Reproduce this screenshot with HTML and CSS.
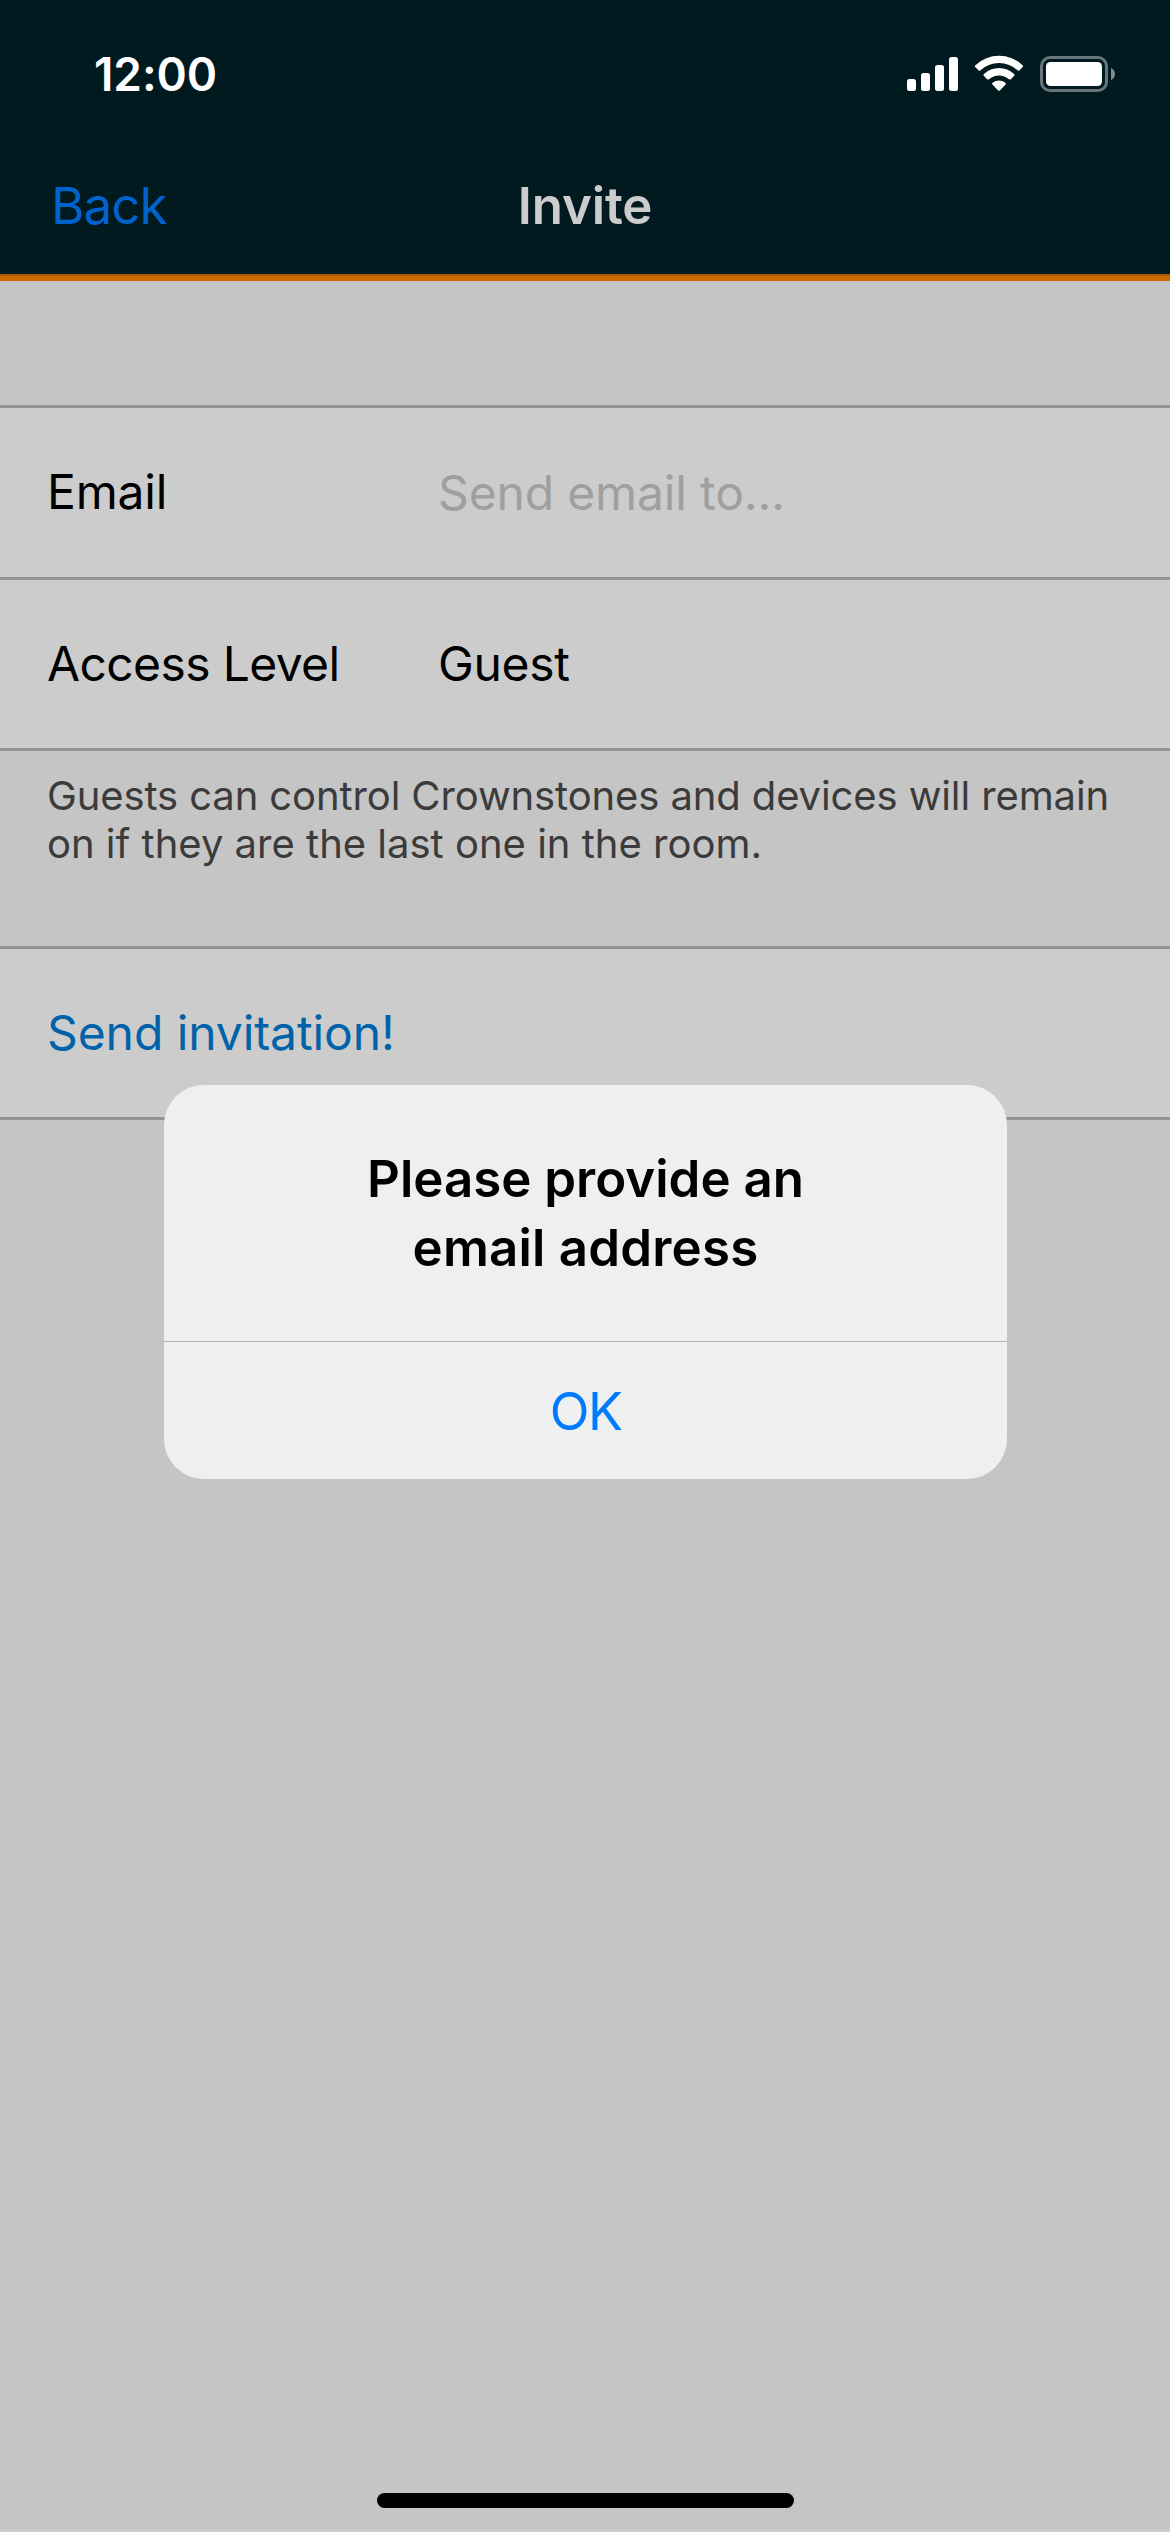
FILE: index.html
```html
<!DOCTYPE html>
<html lang="en">
<head>
<meta charset="utf-8">
<title>Invite</title>
<link rel="stylesheet" href="styles.css">
</head>
<body>
<div class="screen">
  <header class="header">
    <div class="status-bar">
      <span class="time">12:00</span>
      <svg class="status-icons" width="208" height="38" viewBox="907 55 208 38" aria-hidden="true">
        <g fill="#fff">
          <rect x="907" y="79" width="9" height="12" rx="2.5"/>
          <rect x="921" y="73" width="9" height="18" rx="2.5"/>
          <rect x="935" y="65" width="9" height="26" rx="2.5"/>
          <rect x="949" y="57" width="9" height="34" rx="2.5"/>
          <path d="M975.4 65.2A34.5 34.5 0 0 1 1022.6 65.2Q1023.6 66.2 1022.7 67.1L1019.3 70.6Q1018.6 71.3 1017.9 70.6A27.5 27.5 0 0 0 980.1 70.6Q979.4 71.3 978.7 70.6L975.3 67.1Q974.4 66.2 975.4 65.2Z"/>
          <path d="M983.9 73.9A22 22 0 0 1 1014.1 73.9Q1015.2 74.9 1014.2 75.8L1010.9 79.2Q1010 80 1009 79.2A15 15 0 0 0 989 79.2Q988 80 987.1 79.2L983.8 75.8Q982.8 74.9 983.9 73.9Z"/>
          <path d="M992.6 82.7A10.3 10.3 0 0 1 1005.4 82.7Q1006.5 83.6 1005.6 84.5L999.8 90.4Q999 91.2 998.2 90.4L992.4 84.5Q991.5 83.6 992.6 82.7Z"/>
          <rect x="1046" y="62" width="56" height="24" rx="4.5"/>
        </g>
        <rect x="1041.5" y="57.5" width="65" height="33" rx="8.5" fill="none" stroke="#66767a" stroke-width="3"/>
        <path d="M1111 68Q1115 70 1115 74T1111 80Z" fill="#7f8d90"/>
      </svg>
    </div>
    <nav class="nav-bar">
      <a class="back">Back</a>
      <h1 class="title">Invite</h1>
      <span></span>
    </nav>
    <div class="accent"></div>
  </header>

  <main class="content">
    <section class="group">
      <div class="row">
        <label class="label email">Email</label>
        <span class="placeholder">Send email to...</span>
      </div>
      <div class="row">
        <span class="label">Access Level</span>
        <span class="value">Guest</span>
      </div>
    </section>
    <p class="note"><span class="note-first">Guests can control Crownstones and devices will remain</span><br>on if they are the last one in the room.</p>
    <section class="group">
      <div class="row"><a class="send">Send invitation!</a></div>
    </section>
  </main>
  <div class="bottom-edge"></div>

  <div class="alert" role="alertdialog">
    <h2 class="alert-title">Please provide an<br><span class="alert-second">email address</span></h2>
    <div class="alert-action">OK</div>
  </div>
  <div class="home-indicator"></div>
</div>
</body>
</html>
```
FILE: styles.css
```css
* { box-sizing: border-box; }

body { margin: 0; }

.screen {
  position: relative;
  display: flex;
  flex-direction: column;
  width: 1170px;
  height: 2532px;
  overflow: hidden;
  background: #c5c5c5;
  color: #000;
  font-family: "Inter", sans-serif;
  font-size: 48px;
}

.header {
  display: flex;
  flex-direction: column;
  height: 281px;
  background: #001a20;
}

.status-bar {
  display: flex;
  justify-content: space-between;
  align-items: center;
  height: 148px;
  padding: 0 55px 0 94px;
}

.time {
  color: #fff;
  font-size: 46px;
  font-weight: 600;
  letter-spacing: -0.1px;
}

.nav-bar {
  display: grid;
  grid-template-columns: 1fr auto 1fr;
  align-items: center;
  height: 114px;
  padding: 0 51px;
}

.back {
  color: #0062cc;
  font-size: 51px;
  letter-spacing: -0.9px;
}

.title {
  margin: 0;
  color: #ccc;
  font-size: 51px;
  font-weight: 600;
  letter-spacing: -0.15px;
}

.accent {
  height: 7px;
  margin-top: auto;
  background: #cc6a00;
  border-top: 2px solid #a95800;
}

.content {
  flex: 1;
  padding-top: 124px;
}

.group { border-top: 3px solid #949494; }

.row {
  display: flex;
  align-items: center;
  height: 171px;
  padding: 0 47px;
  background: #ccc;
  border-bottom: 3px solid #949494;
}

.row:first-child:not(:last-child) { height: 172px; }

.label {
  width: 391px;
  padding-bottom: 2px;
  letter-spacing: -0.63px;
}

.email { letter-spacing: -0.2px; }

.placeholder {
  color: #9f9fa0;
  letter-spacing: -0.15px;
}

.value {
  padding-bottom: 2px;
  letter-spacing: -0.3px;
}

.note {
  height: 195px;
  margin: 0;
  padding: 21px 47px 0;
  color: #3b3b3b;
  font-size: 40px;
  line-height: 48px;
  white-space: nowrap;
}

.note-first { letter-spacing: -0.11px; }

.send {
  padding-bottom: 2px;
  color: #0062a8;
  letter-spacing: -0.08px;
}

.alert {
  position: absolute;
  top: 1085px;
  left: 164px;
  width: 843px;
  height: 394px;
  border-radius: 40px;
  background: #eef0f0;
  text-align: center;
}

.alert-title {
  height: 257px;
  margin: 0;
  padding-top: 59px;
  border-bottom: 1px solid #b0b1b1;
  font-size: 51px;
  font-weight: 600;
  line-height: 69px;
}

.alert-second { letter-spacing: 0.2px; }

.alert-action {
  padding-top: 2px;
  color: #007aff;
  font-size: 52px;
  line-height: 135px;
  letter-spacing: -1.7px;
}

.home-indicator {
  position: absolute;
  top: 2493px;
  left: 377px;
  width: 417px;
  height: 15px;
  border-radius: 8px;
  background: #000;
}

.bottom-edge {
  height: 3px;
  background: #ccc;
}
```
